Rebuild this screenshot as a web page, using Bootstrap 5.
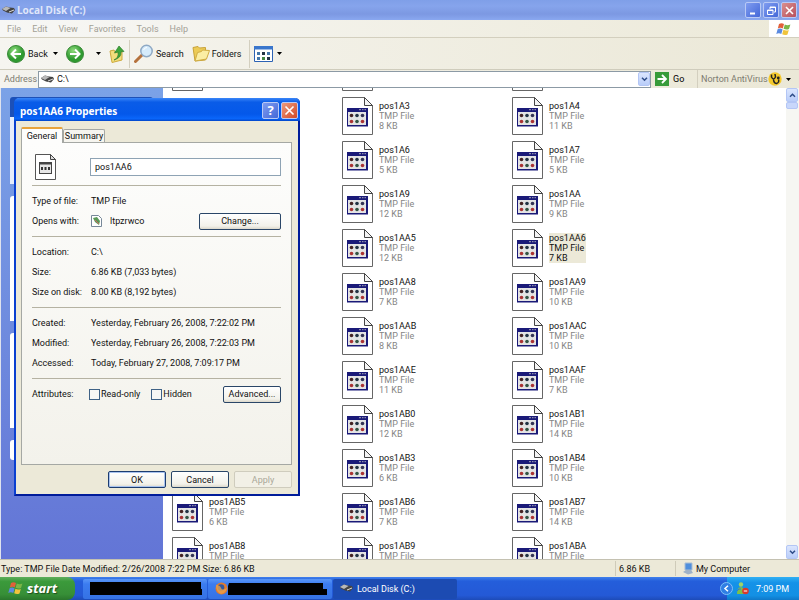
<!DOCTYPE html>
<html lang="en">
<head>
<meta charset="utf-8">
<meta name="viewport" content="width=device-width, initial-scale=1">
<title>Local Disk (C:)</title>
<link href="https://cdn.jsdelivr.net/npm/bootstrap@5.3.0/dist/css/bootstrap.min.css" rel="stylesheet">
<style>
  :root { --ui: Roboto, "Liberation Sans", sans-serif; }
  body { font-family: var(--ui); font-size: 9px; line-height: 10px; color: #111; background: #ece9d8; }
  button, input { font: inherit; color: inherit; }
  a, a:hover { color: inherit; text-decoration: none; }
  svg { display: block; flex: none; }

  .win-title { height: 20px; background: linear-gradient(#7f9fe8, #86a4ec 30%, #7c98e2 70%, #8aa8f0); color: #dfe6fa; padding: 0 2px; gap: 2px; }
  .title-text { font: bold 10px/12px "Noto Sans", sans-serif; }
  .cap-btn { width: 16px; height: 16px; padding: 0; border: 1px solid #b9c9f5; border-radius: 2px; background: linear-gradient(135deg, #7f9cf0, #4468d8); display: grid; place-items: center; }
  .cap-close { background: linear-gradient(135deg, #d98f8f, #b8505c); }
  .menu-row { height: 18px; border-bottom: 1px solid #d3cfbe; background: linear-gradient(90deg, #f7f7f5, #ece9d8); color: #a3a196; padding-left: 7px; gap: 11px; }
  .flag-box { width: 30px; background: #fff; }
  .tool-row { height: 32px; border-bottom: 1px solid #cfccbc; background: linear-gradient(90deg, #f6f5f0, #ebe8d7); padding-left: 7px; }
  .plain-btn { border: 0; background: none; padding: 0; display: flex; align-items: center; white-space: nowrap; }
  .back-btn { width: 42px; gap: 3px; }
  .pic-btn { gap: 2px; }
  .tool-sep { width: 1px; height: 28px; background: #d3cfbf; }
  .addr-row { height: 18px; background: linear-gradient(90deg, #f4f3ee, #ebe8d7); color: #7c7a70; padding-left: 4px; }
  .addr-row label { width: 34px; }
  .addr-box { border: 1px solid #8c9aa5; background: #fff; height: 17px; padding-left: 2px; color: #111; min-width: 0; }
  .addr-box input { border: 0; outline: 0; padding: 0 3px; background: none; min-width: 0; }
  .go-btn { width: 42px; }
  .norton-btn { width: 93px; padding-left: 3px; }
  .scroll-btn { width: 12px; height: 14px; padding: 0; border: 1px solid #b3c6f5; border-radius: 2px; background: linear-gradient(#dbe6fe, #b9cdf9); display: grid; place-items: center; }

  main { min-height: 0; }
  .tasks { width: 163px; border-left: 1px solid #dfe3ee; background: linear-gradient(#7ba2e7, #6375d6); padding: 9px 10px 0 9px; gap: 12px; }
  .task-box { border-radius: 3px 3px 0 0; background: linear-gradient(90deg, #fff, #c6d3f7); }
  .task-head { height: 20px; border-radius: 3px 3px 0 0; background: #1c50b8; }
  .task-a { height: 67px; background: #e6edfc; }
  .task-b { height: 125px; } .task-c { height: 95px; } .task-d { height: 20px; border-radius: 3px; }

  .files { grid-template-columns: repeat(3, 170px); grid-auto-rows: 44px; margin: -38px 0 0 9px; }
  .file-item { gap: 6px; color: #858585; }
  .file-item b { font-weight: 400; color: #111; display: block; }
  .file-item.picked div { background: #ece9d8; color: #111; }
  .vscroll { width: 13px; background: #f6f6f2; }
  .thumb { width: 12px; height: 7px; border: 1px solid #b3c6f5; border-radius: 2px; background: #c8d7fb; }

  .status-row { height: 18px; border-top: 1px solid #c4c1b1; background: #ece9d8; padding-left: 1px; }
  .status-cell { border-left: 1px solid #cfcbb9; height: 15px; }
  .cell-size { width: 60px; padding-left: 3px; } .cell-zone { width: 124px; padding-left: 7px; gap: 3px; }
  .taskbar { height: 23px; background: linear-gradient(#3f80ec, #245edb 18%, #2459d6 80%, #1d4bb8); color: #fff; }
  .start-btn { width: 75px; border: 0; border-radius: 0 8px 8px 0; background: linear-gradient(#5fae5c, #3b9a3b 20%, #378f37 75%, #2a762c); font: italic bold 13px/18px "Open Sans", sans-serif; color: #fff; gap: 3px; padding: 0 0 1px 8px; text-shadow: 1px 1px 1px #1d4d1d; }
  .runs { gap: 1px; }
  .run-btn { width: 124px; height: 20px; border: 0; border-radius: 2px; color: #fff; padding: 0 7px; background: linear-gradient(#5a97f7, #3c7cf0 25%, #3572e4); }
  .run-on { background: #1c4bb2; }
  .tray { width: 72px; background: linear-gradient(#30b0f4, #1592e8 25%, #1390e4 80%, #0f78c8); gap: 3px; }
  .tray-knob { width: 13px; height: 13px; border: 1px solid #7fc0f8; border-radius: 50%; background: #2f7fe4; padding: 0; margin-left: -7px; display: grid; place-items: center; }

  .props { left: 14px; top: 98px; width: 286px; border: 2px solid #0a3fd0; border-right-color: #001c9a; border-bottom-color: #001c9a; border-top: 0; border-radius: 5px 5px 0 0; background: #ece9d8; }
  .props-title { height: 23px; border-radius: 5px 5px 0 0; background: linear-gradient(#3a86f8, #0a5ce8 18%, #0458ea 70%, #0a66fa 90%, #0044c8); color: #fff; padding: 2px 2px 0 6px; gap: 2px; margin: 0 -2px; }
  .props-title .cap-btn { width: 17px; height: 17px; }
  .props-title .cap-close { background: linear-gradient(135deg, #ee9a7c, #d04a28); }
  .help-mark { font: bold 13px/15px "Noto Sans", sans-serif; color: #fff; }
  .props-body { padding: 6px 6px 6px 5px; }
  .tab { border: 1px solid #a5a8a4; border-bottom: 0; border-radius: 2px 2px 0 0; background: #f6f5ef; height: 13px; width: 42px; padding: 0; white-space: nowrap; }
  .tab-on { border-top: 2px solid #e8a33a; background: #fdfdfc; height: 16px; margin-bottom: -1px; z-index: 1; }
  .pane { border: 1px solid #a5a8a4; background: linear-gradient(#fdfdfc, #f3f2eb); height: 323px; padding: 0 10px; }
  .name-row { height: 42px; padding: 5px 0 0 3px; gap: 34px; }
  .name-row input { height: 18px; border: 1px solid #8ea3b4; background: #fff; padding: 0 4px; min-width: 0; }
  .sect { border-top: 1px solid #b5b2a2; padding: 5px 0; margin: 0; }
  .sect > div { height: 20px; }
  .sect dt { width: 59px; font-weight: 400; }
  .sect dd { margin: 0; }
  .xp-btn { height: 17px; border: 1px solid #2a4668; border-radius: 2px; background: linear-gradient(#fff, #f2f1ea 80%, #dcd8cb); padding: 0; text-align: center; }
  .xp-btn:disabled { border-color: #cfccbd; background: #f2f0e6; color: #aaa899; }
  .w-ok { width: 58px; } .w-change { width: 82px; }
  .xp-default { border-color: #1c3c70; box-shadow: inset 0 0 0 1px #a9c3ee; }
  .xp-check { appearance: none; width: 11px; height: 11px; border: 1px solid #3f6286; background: #f7f7f4; margin: 0 1px 0 0; }
  .attr { gap: 11px; margin-left: -2px !important; }
  .dlg-btns { gap: 5px; padding-top: 6px; }
</style>
</head>
<body class="vh-100 d-flex flex-column overflow-hidden position-relative">

<svg width="0" height="0" class="position-absolute">
  <defs>
    <symbol id="tmp" viewBox="0 0 31 38">
      <path d="M.5.5h22l8 8v29H.5z" fill="#fff" stroke="#666"/>
      <path d="M22.500.5v8h8z" fill="#f4f4f4" stroke="#444"/>
      <path d="M5 11h21v18.500H5z" fill="#1a1a78"/>
      <path d="M6 15h18v13H6z" fill="#e4e4e4"/>
      <path d="M17 12.700h2m1 0h1.500m1 0h1.500" stroke="#aab" />
      <g><circle cx="9.500" cy="18.500" r="1.800" fill="#422"/><circle cx="15" cy="18.500" r="1.800" fill="#234"/><circle cx="20.500" cy="18.500" r="1.800" fill="#335"/>
      <circle cx="9.500" cy="24.500" r="1.800" fill="#a33"/><circle cx="15" cy="24.500" r="1.800" fill="#354"/><circle cx="20.500" cy="24.500" r="1.800" fill="#a33"/></g>
    </symbol>
    <symbol id="drive" viewBox="0 0 13 9">
      <path d="M0 3l4-2.500 4 1 4 .5 1 2-3 3.500-5-1L1 4.500z" fill="#444"/>
      <path d="M0 3l4-2.500 4.500 1.500L4 5z" fill="#b9b9b9"/>
      <path d="M7 6l5-2" stroke="#ddd"/>
    </symbol>
    <symbol id="flag" viewBox="0 0 16 14">
      <path d="M3 2q2.500-1.500 5 0L6.800 6.500Q4.500 5 1.800 6.400z" fill="#e2603a"/>
      <path d="M8.800 2.400q2.500 1.500 5.600.1L13 7q-2.700 1.300-5.400-.2z" fill="#7cb648"/>
      <path d="M1.600 7.300q2.500-1.400 5 .1L5.300 12Q3 10.700.3 11.900z" fill="#5a8ae0"/>
      <path d="M7.400 7.800q2.600 1.400 5.400.2L11.500 12.500q-2.700 1.300-5.300-.2z" fill="#f0c43c"/>
    </symbol>
    <symbol id="down" viewBox="0 0 5 3"><path d="M0 0h5L2.500 3z"/></symbol>
    <radialGradient id="grn" cx=".4" cy=".3"><stop offset="0" stop-color="#8edb7c"/><stop offset="1" stop-color="#2f9a30"/></radialGradient>
  </defs>
</svg>

<header class="win-title d-flex align-items-center flex-shrink-0">
  <svg width="13" height="9"><use href="#drive"/></svg>
  <span class="title-text flex-fill">Local Disk (C:)</span>
  <button class="cap-btn" aria-label="Minimize"><svg width="11" height="11"><path d="M2 8.500h5" stroke="#fff" stroke-width="2"/></svg></button>
  <button class="cap-btn" aria-label="Restore"><svg width="11" height="11" fill="none" stroke="#fff"><path d="M4 4V2h5.500v5H8M1.500 5h5.500v4.500H1.500zM1.500 5.500H7M4 2.500h5"/></svg></button>
  <button class="cap-btn cap-close" aria-label="Close"><svg width="11" height="11"><path d="M2 2l7 7M9 2L2 9" stroke="#fff" stroke-width="1.600"/></svg></button>
</header>

<nav class="menu-row d-flex align-items-center flex-shrink-0">
  <a href="#">File</a><a href="#">Edit</a><a href="#">View</a><a href="#">Favorites</a><a href="#">Tools</a><a href="#">Help</a>
  <span class="flag-box ms-auto align-self-stretch d-flex align-items-center justify-content-center"><svg width="16" height="14"><use href="#flag"/></svg></span>
</nav>

<div class="tool-row d-flex align-items-center flex-shrink-0">
  <button class="plain-btn back-btn">
    <svg width="18" height="18"><circle cx="9" cy="9" r="8.500" fill="url(#grn)" stroke="#3a8a38"/><path d="M14 9H5M9 4.500L4.500 9 9 13.500" fill="none" stroke="#fff" stroke-width="2"/></svg>
    <span>Back</span>
  </button>
  <button class="plain-btn ms-1 me-2" aria-label="Back list"><svg width="5" height="3"><use href="#down"/></svg></button>
  <button class="plain-btn me-2" aria-label="Forward"><svg width="18" height="18"><circle cx="9" cy="9" r="8.500" fill="url(#grn)" stroke="#3a8a38"/><path d="M4 9h9M9 4.500L13.500 9 9 13.500" fill="none" stroke="#fff" stroke-width="2"/></svg></button>
  <button class="plain-btn ms-1 me-2" aria-label="Forward list"><svg width="5" height="3"><use href="#down"/></svg></button>
  <button class="plain-btn me-1" aria-label="Up"><svg width="16" height="18"><path d="M1 6l4-1 1 2 7-1v9L3 17.500z" fill="#f3de7c" stroke="#cda93c"/><path d="M5 15q5-2 4-8L5.500 8 10 1l5 5.500-3 .3q.5 6-7 8.200z" fill="#3fa73a" stroke="#2b7d2b" stroke-width=".7"/></svg></button>
  <span class="tool-sep"></span>
  <button class="plain-btn pic-btn ms-1"><svg width="20" height="19"><path d="M1.500 17.500L8 11" stroke="#b5713c" stroke-width="3" stroke-linecap="round"/><circle cx="12.500" cy="7" r="5.700" fill="#d5ebfb" stroke="#8fa9c4" stroke-width="1.500"/><path d="M9.500 6q1-2.500 3.500-2.500" stroke="#fff" fill="none"/></svg><span>Search</span></button>
  <button class="plain-btn pic-btn ms-2"><svg width="18" height="17"><path d="M1 2.500l5-1 1.500 1.500 6-.5v3l3 .5-3 9L3 16z" fill="#eccb56" stroke="#c8a238"/><path d="M5.500 7.500l4-1 1-1.500 7 .5-3 8.500L3 16z" fill="#fbeea4" stroke="#d0ad44"/></svg><span>Folders</span></button>
  <span class="tool-sep ms-2 me-1"></span>
  <button class="plain-btn gap-1" aria-label="Views"><svg width="19" height="16"><path d="M.5.500h18v15H.5z" fill="#fff" stroke="#2c62b4"/><path d="M0 0h19v3.500H0z" fill="#3a76cc"/><g fill="#47a"><path d="M3 6h3v3H3zM3 11h3v3H3zM13 6h3v3h-3z"/><path fill="#234" d="M8 6h3v3H8zM13 11h3v3h-3z"/><path fill="#484" d="M8 11h3v3H8z"/></g></svg><svg width="5" height="3"><use href="#down"/></svg></button>
</div>

<div class="addr-row d-flex align-items-center flex-shrink-0">
  <label for="addr">Address</label>
  <div class="addr-box d-flex align-items-center flex-fill">
    <svg width="13" height="9"><use href="#drive"/></svg>
    <input id="addr" class="flex-fill" value="C:\">
    <button class="scroll-btn" aria-label="Address list"><svg width="7" height="5"><path d="M1 .8l2.500 2.500L6 .8" fill="none" stroke="#2e4c88" stroke-width="1.500"/></svg></button>
  </div>
  <button class="plain-btn go-btn ms-1 gap-1 text-black"><svg width="14" height="14"><path d="M0 0h14v14H0z" fill="#379b3a"/><path d="M2.500 7h8M7 3l4 4-4 4" stroke="#fff" fill="none" stroke-width="1.800"/></svg><span>Go</span></button>
  <span class="tool-sep h-100"></span>
  <button class="plain-btn norton-btn me-2"><span>Norton AntiVirus</span>
    <svg width="14" height="14" class="ms-auto"><circle cx="7" cy="7" r="6.700" fill="#f4c92c"/><path d="M3.500 2.500v2.500q2 4 4 0l-.5-3M5.500 7q0 4 3 4.500 3-1 2-4" stroke="#222" fill="none" stroke-width="1.500"/><circle cx="10.300" cy="6" r="1.400" fill="#222"/></svg>
    <svg width="5" height="3" class="ms-1"><use href="#down"/></svg></button>
</div>

<main class="d-flex flex-fill overflow-hidden bg-white">
  <aside class="tasks d-flex flex-column flex-shrink-0">
    <div><div class="task-head"></div><div class="task-a"></div></div>
    <div class="task-box task-b"></div>
    <div class="task-box task-c"></div>
    <div class="task-box task-d"></div>
  </aside>
  <div class="flex-fill overflow-hidden"><div class="files d-grid" id="files"></div></div>
  <div class="vscroll d-flex flex-column flex-shrink-0">
    <button class="scroll-btn" aria-label="Scroll up"><svg width="7" height="5"><path d="M1 3.800l2.500-2.500L6 3.800" fill="none" stroke="#2e4c88" stroke-width="1.500"/></svg></button>
    <span class="thumb"></span>
    <button class="scroll-btn mt-auto" aria-label="Scroll down"><svg width="7" height="5"><path d="M1 .8l2.500 2.500L6 .8" fill="none" stroke="#2e4c88" stroke-width="1.500"/></svg></button>
  </div>
</main>

<footer class="status-row d-flex align-items-center flex-shrink-0">
  <span class="flex-fill">Type: TMP File Date Modified: 2/26/2008 7:22 PM Size: 6.86 KB</span>
  <span class="status-cell cell-size d-flex align-items-center">6.86 KB</span>
  <span class="status-cell cell-zone d-flex align-items-center"><svg width="10" height="13"><path d="M2 1h7v7H2z" fill="#4f8fdc" stroke="#a9bdd4"/><path d="M0 10l3-2h5l2 3-5 1.500z" fill="#9fb2c8"/></svg>My Computer</span>
</footer>

<div class="taskbar d-flex align-items-center flex-shrink-0">
  <button class="start-btn h-100 d-flex align-items-center me-2"><svg width="16" height="14"><use href="#flag"/></svg>start</button>
  <div class="runs d-flex">
    <button class="run-btn" aria-label="Window 1"><svg width="112" height="13"><path d="M0 0h111v7h1v6H0z"/></svg></button>
    <button class="run-btn d-flex align-items-center" aria-label="Firefox"><svg width="113" height="13"><circle cx="6.500" cy="6.500" r="6" fill="#e07a2c"/><circle cx="6" cy="5.500" r="3.300" fill="#34589c"/><path d="M1 3q4 0 5 3t6 0q-1 5-6 6-5-2-5-9z" fill="#e8a04a" opacity=".8"/><path d="M14 1h94v6h4v6H13V4z"/></svg></button>
    <button class="run-btn run-on d-flex align-items-center gap-1"><svg width="13" height="9"><use href="#drive"/></svg>Local Disk (C:)</button>
  </div>
  <div class="tray ms-auto h-100 d-flex align-items-center">
    <button class="tray-knob" aria-label="Show hidden icons"><svg width="7" height="7"><path d="M5 .8L2 3.500 5 6.200" fill="none" stroke="#fff" stroke-width="1.500"/></svg></button>
    <svg width="13" height="13"><circle cx="5" cy="2.500" r="2.200" fill="#9ed36a"/><path d="M1 12q0-7 4-7 3 0 4 7z" fill="#7cc04c"/><path d="M1 9q2-3 4-2" stroke="#3a78c8" fill="none"/><circle cx="9.500" cy="9" r="3.300" fill="#d8382c"/><path d="M7.800 9h3.400" stroke="#fff"/></svg>
    <span class="ms-1">7:09 PM</span>
  </div>
</div>

<section class="props position-absolute" role="dialog" aria-labelledby="ptitle">
  <div class="props-title d-flex align-items-center">
    <span class="title-text flex-fill" id="ptitle">pos1AA6 Properties</span>
    <button class="cap-btn" aria-label="Help"><span class="help-mark">?</span></button>
    <button class="cap-btn cap-close" aria-label="Close"><svg width="11" height="11"><path d="M1.500 1.500l8 8M9.500 1.500l-8 8" stroke="#fff" stroke-width="1.700"/></svg></button>
  </div>
  <div class="props-body">
    <div class="d-flex align-items-end">
      <button class="tab tab-on position-relative">General</button><button class="tab">Summary</button>
    </div>
    <div class="pane">
      <div class="name-row d-flex align-items-center">
        <svg width="21" height="26"><path d="M.5.500h15l5 5v20H.5z" fill="#fff" stroke="#555"/><path d="M15.500.5v5h5z" fill="#ddd" stroke="#444"/><path d="M4 8h13v12H4z" fill="#444"/><path d="M5 10.500h11V19H5z" fill="#e6e6e6"/><path d="M6 13h2v3H6zM9.500 13h2v3h-2zM13 13h2v3h-2z" fill="#333"/></svg>
        <input class="flex-fill" value="pos1AA6" aria-label="File name">
      </div>
      <dl class="sect">
        <div class="d-flex align-items-center"><dt>Type of file:</dt><dd>TMP File</dd></div>
        <div class="d-flex align-items-center"><dt>Opens with:</dt><dd class="d-flex align-items-center flex-fill gap-2"><svg width="11" height="12"><path d="M.5.500h7l3 3v8H.5z" fill="#fff" stroke="#789"/><path d="M2 3l4-1 3 4-1 4-4-3z" fill="#5a9a58"/><path d="M4 5l4 4" stroke="#c66"/></svg>ltpzrwco<button class="xp-btn w-change ms-auto">Change...</button></dd></div>
      </dl>
      <dl class="sect">
        <div class="d-flex align-items-center"><dt>Location:</dt><dd>C:\</dd></div>
        <div class="d-flex align-items-center"><dt>Size:</dt><dd>6.86 KB (7,033 bytes)</dd></div>
        <div class="d-flex align-items-center"><dt>Size on disk:</dt><dd>8.00 KB (8,192 bytes)</dd></div>
      </dl>
      <dl class="sect">
        <div class="d-flex align-items-center"><dt>Created:</dt><dd>Yesterday, February 26, 2008, 7:22:02 PM</dd></div>
        <div class="d-flex align-items-center"><dt>Modified:</dt><dd>Yesterday, February 26, 2008, 7:22:03 PM</dd></div>
        <div class="d-flex align-items-center"><dt>Accessed:</dt><dd>Today, February 27, 2008, 7:09:17 PM</dd></div>
      </dl>
      <dl class="sect">
        <div class="d-flex align-items-center"><dt>Attributes:</dt><dd class="attr d-flex align-items-center flex-fill">
          <label class="d-flex align-items-center"><input type="checkbox" class="xp-check">Read-only</label>
          <label class="d-flex align-items-center"><input type="checkbox" class="xp-check">Hidden</label>
          <button class="xp-btn w-ok ms-auto">Advanced...</button></dd></div>
      </dl>
    </div>
    <div class="dlg-btns d-flex justify-content-end">
      <button class="xp-btn xp-default w-ok">OK</button><button class="xp-btn w-ok">Cancel</button><button class="xp-btn w-ok" disabled>Apply</button>
    </div>
  </div>
</section>

<script src="https://cdn.jsdelivr.net/npm/bootstrap@5.3.0/dist/js/bootstrap.bundle.min.js"></script>
<script>
  // [name, size, extra class]; an empty name draws the icon only, "c2" starts a row in the second column
  const files = [
    ["", ""], ["", ""], ["", ""],
    ["pos1A3", "8 KB", "c2"], ["pos1A4", "11 KB"], ["pos1A6", "5 KB", "c2"], ["pos1A7", "5 KB"],
    ["pos1A9", "12 KB", "c2"], ["pos1AA", "9 KB"], ["pos1AA5", "12 KB", "c2"], ["pos1AA6", "7 KB", "picked"],
    ["pos1AA8", "7 KB", "c2"], ["pos1AA9", "10 KB"], ["pos1AAB", "8 KB", "c2"], ["pos1AAC", "10 KB"],
    ["pos1AAE", "11 KB", "c2"], ["pos1AAF", "7 KB"], ["pos1AB0", "12 KB", "c2"], ["pos1AB1", "14 KB"],
    ["pos1AB3", "6 KB", "c2"], ["pos1AB4", "10 KB"],
    ["pos1AB5", "6 KB"], ["pos1AB6", "7 KB"], ["pos1AB7", "14 KB"],
    ["pos1AB8", "&nbsp;"], ["pos1AB9", "&nbsp;"], ["pos1ABA", "&nbsp;"]
  ];
  const list = document.getElementById("files");
  for (const [name, size, cls = ""] of files) {
    const el = document.createElement("div");
    el.className = "file-item d-flex align-items-center " + cls;
    if (cls === "c2") el.style.gridColumnStart = 2;
    el.innerHTML = '<svg width="31" height="38"><use href="#tmp"/></svg>' +
      (name ? `<div><b>${name}</b>TMP File<br>${size}</div>` : "");
    list.append(el);
  }
</script>
</body>
</html>
